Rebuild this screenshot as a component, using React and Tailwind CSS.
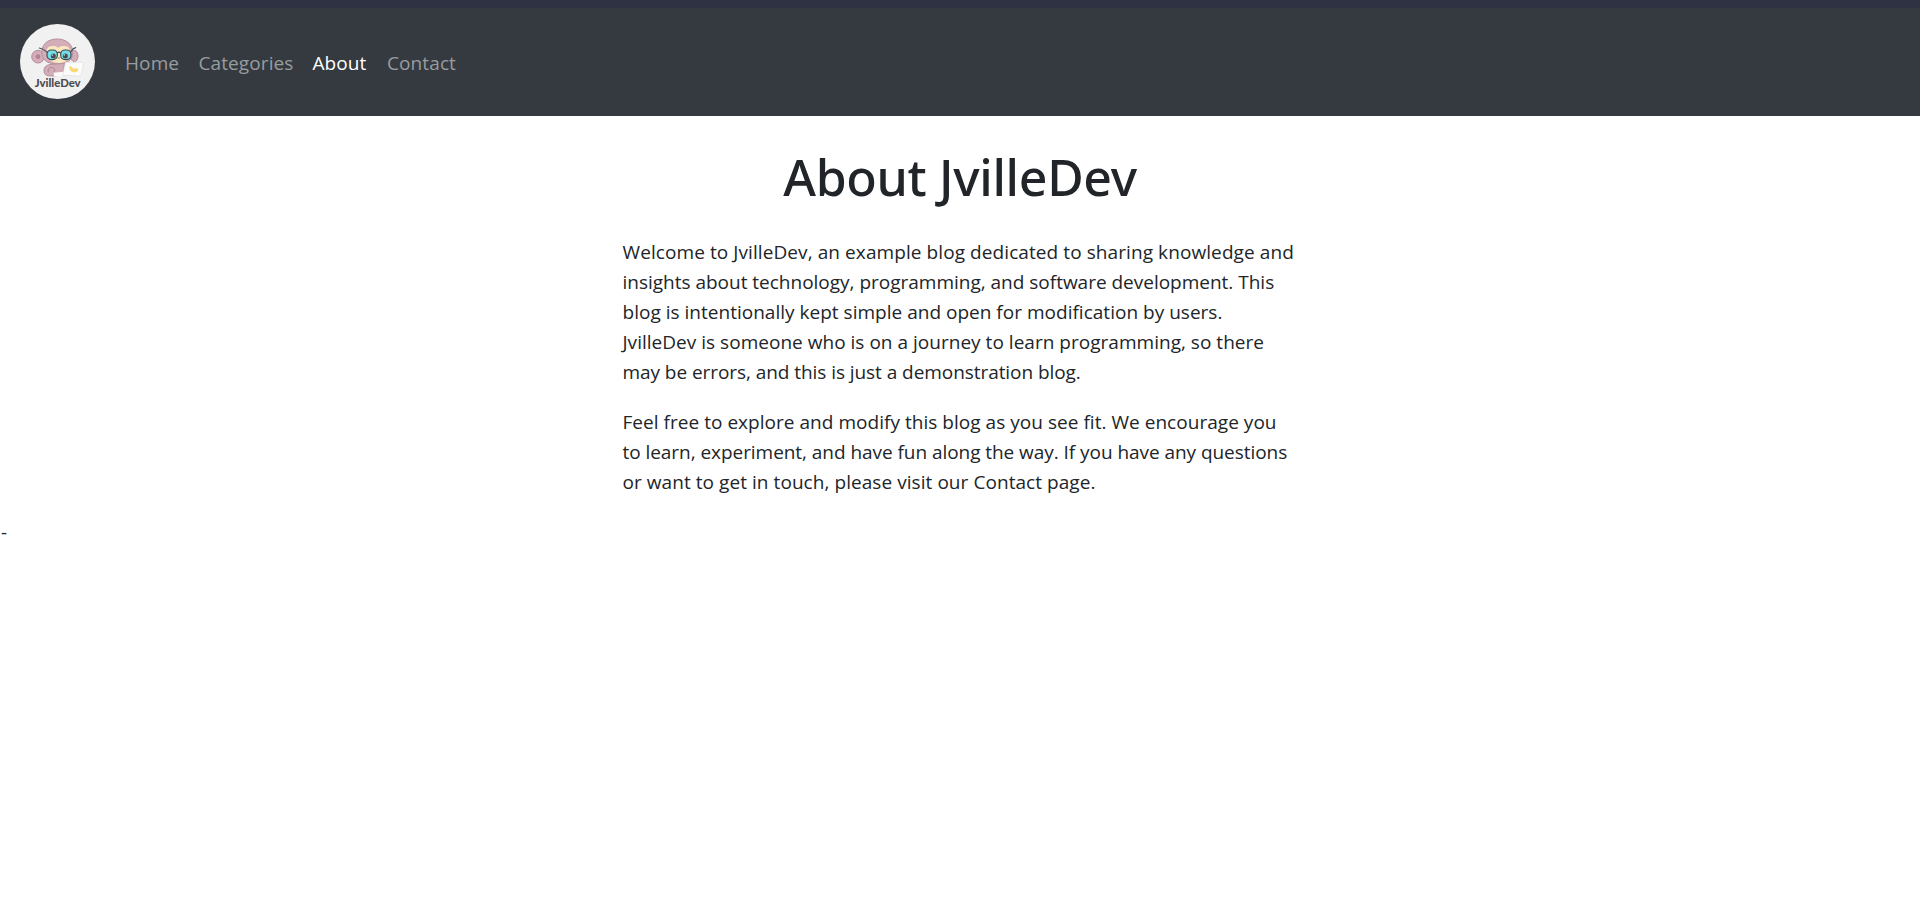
const links = [
  { label: "Home", box: "w-[73.5px]" },
  { label: "Categories", box: "w-[114px]" },
  { label: "About", box: "w-[74.5px]", active: true },
  { label: "Contact", box: "w-[80px]" },
];

const intro = [
  { text: "Welcome to JvilleDev, an example blog dedicated to sharing knowledge and", track: "tracking-[0.085px]" },
  { text: "insights about technology, programming, and software development. This", track: "tracking-[-0.01px]" },
  { text: "blog is intentionally kept simple and open for modification by users.", track: "tracking-[0.015px]" },
  { text: "JvilleDev is someone who is on a journey to learn programming, so there", track: "tracking-[0.022px]" },
  { text: "may be errors, and this is just a demonstration blog.", track: "tracking-[-0.06px]" },
];

const invite = [
  { text: "Feel free to explore and modify this blog as you see fit. We encourage you", track: "tracking-[0.035px]" },
  { text: "to learn, experiment, and have fun along the way. If you have any questions", track: "tracking-[-0.05px]" },
  { text: "or want to get in touch, please visit our Contact page.", track: "tracking-[0.06px]" },
];

function Logo() {
  return (
    <svg viewBox="60 72 225 225" className="block size-[75px] shrink-0" role="img" aria-label="JvilleDev">
      <circle cx="172.5" cy="184.5" r="112.5" fill="#f1f1f2" />
      {/* ears */}
      <ellipse cx="223" cy="168" rx="11" ry="17" fill="#d3adb8" stroke="#b98f9d" strokeWidth="3" />
      <circle cx="114" cy="170" r="19" fill="#d3adb8" stroke="#b98f9d" strokeWidth="3" />
      <circle cx="114" cy="170" r="7" fill="#b08492" />
      {/* head and face */}
      <path d="M126 163 C122 134 143 117 171 117 C200 117 220 134 218 160 C217 181 200 192 174 192 C147 192 129 184 126 163Z" fill="#d3adb8" stroke="#b98f9d" strokeWidth="3" />
      <path d="M141 162 C137 148 143 138 158 138 C166 138 171 140 175 144 C179 140 184 138 192 138 C207 138 212 148 210 162 C209 180 196 189 177 189 C157 189 144 180 141 162Z" fill="#fbe8c0" />
      {/* body and arm */}
      <path d="M132 212 C131 200 142 193 156 193 L193 190 L190 222 C180 228 165 226 160 228 L142 227 C135 224 132 220 132 212Z" fill="#d3adb8" stroke="#b98f9d" strokeWidth="3" strokeLinejoin="round" />
      <path d="M145 216 C141 205 152 199 161 205 C165 208 166 212 162 215" fill="none" stroke="#b08492" strokeWidth="3" strokeLinecap="round" />
      {/* glasses and eyes */}
      <rect x="141" y="150" width="31" height="29" rx="13" fill="#74dfe8" stroke="#3f4a53" strokeWidth="3.5" />
      <rect x="182" y="150" width="31" height="29" rx="13" fill="#74dfe8" stroke="#3f4a53" strokeWidth="3.5" />
      <path d="M118 144 Q129 146 142 157 M212 156 Q218 145 227 143 M172 159 Q177 154 182 159" fill="none" stroke="#3f4a53" strokeWidth="3.5" strokeLinecap="round" />
      <circle cx="160" cy="168" r="7.5" fill="#51484a" />
      <circle cx="196" cy="168" r="7.5" fill="#51484a" />
      <circle cx="157" cy="165" r="2.5" fill="#a9eef2" />
      <circle cx="193" cy="165" r="2.5" fill="#a9eef2" />
      <path d="M174 174 h5" stroke="#8b7068" strokeWidth="2.5" strokeLinecap="round" />
      {/* laptop */}
      <path d="M161 218 L192 215 L190 228 L162 228Z" fill="#fbfbfb" />
      <path d="M197 187 L246 187 Q251 187 250 193 L244 222 Q243 228 238 228 L188 226Z" fill="#fbfbfb" stroke="#dedee0" strokeWidth="2" />
      <path d="M210 198 C215 196 217 205 221 206 C226 206 232 203 234 208 C236 214 228 219 220 217 C210 215 205 202 210 198Z" fill="#f8d974" />
      <text x="104" y="260" textLength="138" lengthAdjust="spacingAndGlyphs" fontFamily="Lato, sans-serif" fontWeight="900" fontSize="32" fill="#4c4c50">
        JvilleDev
      </text>
    </svg>
  );
}

function Paragraph({ lines }) {
  return (
    <p className="mb-5">
      {lines.map((line) => (
        <span key={line.text} className={`block whitespace-nowrap ${line.track}`}>
          {line.text}{" "}
        </span>
      ))}
    </p>
  );
}

export default function App() {
  return (
    <div className="min-h-screen bg-white font-['Open_Sans','Noto_Sans',sans-serif] text-[19px] leading-[30px] text-[#212529]">
      <header className="h-[116px] border-t-8 border-[#2f3243] bg-[#343a40]">
        <nav className="flex h-[108px] items-start pl-5 pt-4">
          <a href="#home">
            <Logo />
          </a>
          <ul className="ml-[30px] mt-6 flex">
            {links.map((link) => (
              <li key={link.label} className={link.box}>
                <a href="#page" className={link.active ? "tracking-[0.1px] text-white" : "tracking-[0.1px] text-[#999c9f]"}>
                  {link.label}
                </a>
              </li>
            ))}
          </ul>
        </nav>
      </header>
      <main className="mx-auto w-[675px] pt-[31px]">
        <h1 className="mb-[30px] text-center font-['Noto_Sans',sans-serif] text-[50px] font-medium leading-[60px] tracking-[-0.33px]">
          About JvilleDev
        </h1>
        <Paragraph lines={intro} />
        <Paragraph lines={invite} />
      </main>
      <div className="pl-px">-</div>
    </div>
  );
}
